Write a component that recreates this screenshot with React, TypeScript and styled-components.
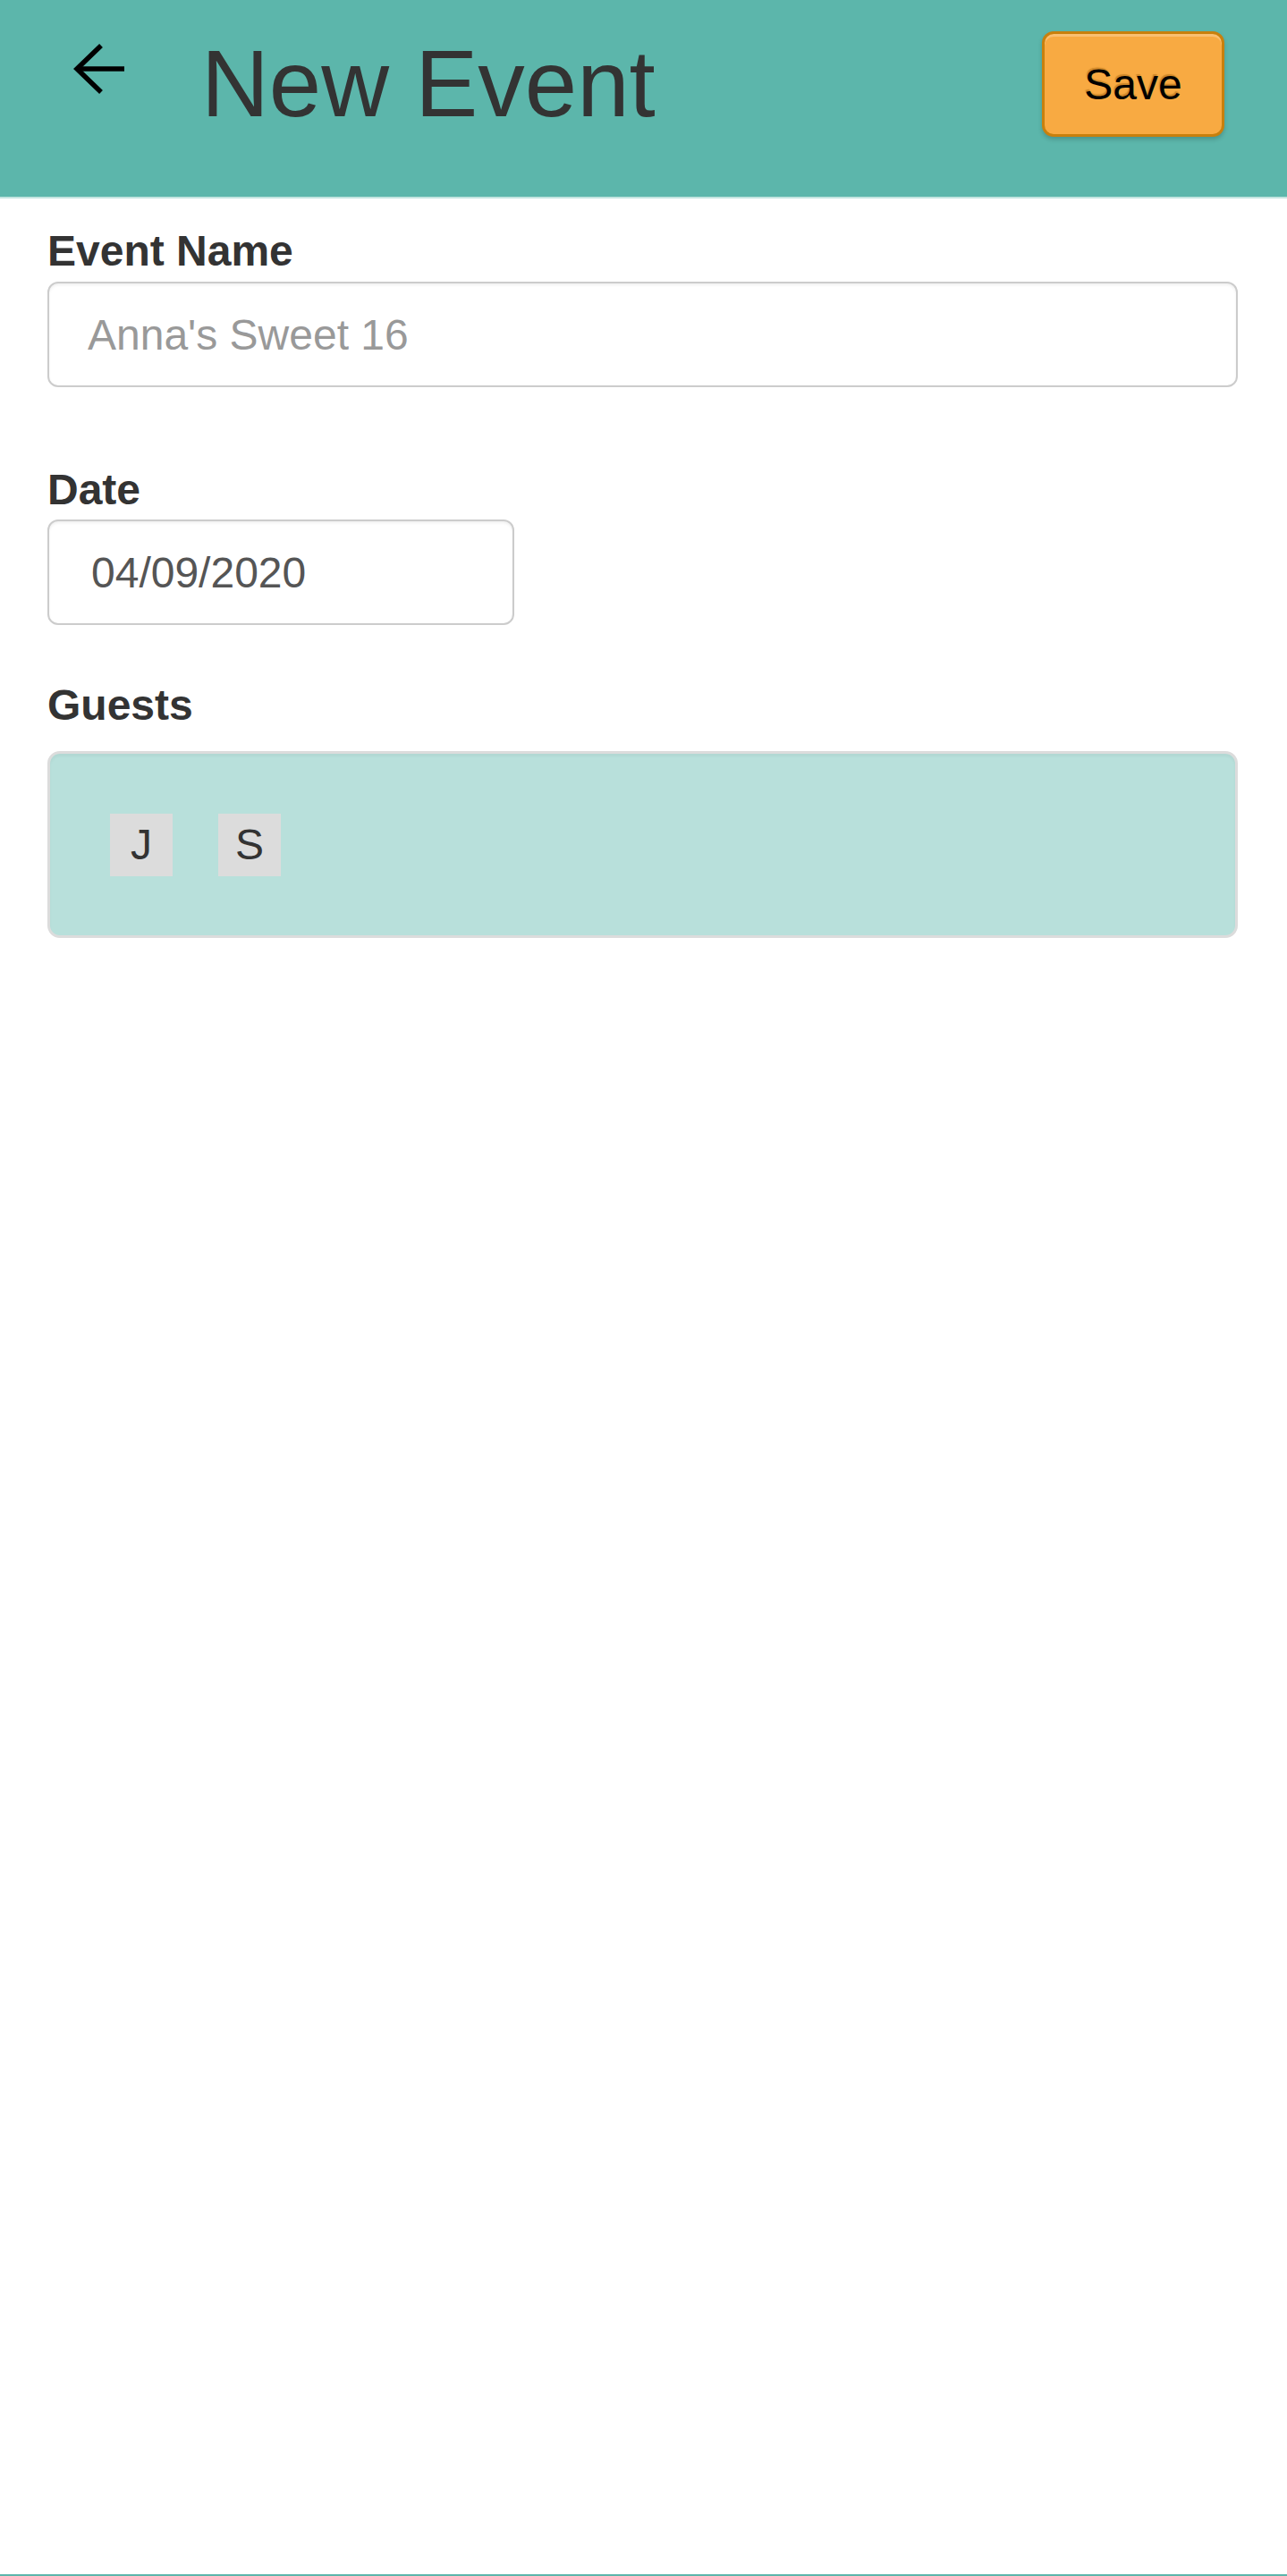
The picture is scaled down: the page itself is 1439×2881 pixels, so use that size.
import React from "react";
import styled, { createGlobalStyle } from "styled-components";

const GlobalStyle = createGlobalStyle`
  html, body {
    margin: 0;
    padding: 0;
    background: #ffffff;
  }
  body {
    font-family: "Liberation Sans", Arial, sans-serif;
    color: #333333;
  }
  * { box-sizing: border-box; }
`;

const Page = styled.div`
  min-height: 100vh;
  display: flex;
  flex-direction: column;
  border-bottom: 2px solid #5cb6ab;
`;

const Header = styled.header`
  height: 222px;
  background: #5cb6ab;
  border-bottom: 2px solid #c3e5e0;
  display: flex;
  align-items: flex-start;
  padding: 0 70px 0 81px;
`;

const BackButton = styled.button`
  margin-top: 48px;
  width: 60px;
  height: 58px;
  padding: 0;
  border: none;
  background: transparent;
  display: flex;
  cursor: pointer;
`;

const Title = styled.h1`
  margin: 34px 0 0 84px;
  font-size: 105px;
  line-height: 120px;
  font-weight: 400;
  color: #333333;
`;

const SaveButton = styled.button`
  margin-left: auto;
  margin-top: 35px;
  width: 204px;
  height: 118px;
  border: 3px solid #c8800d;
  border-radius: 13px;
  background: #f8aa42;
  box-shadow: inset 0 3px 0 rgba(255, 255, 255, 0.25), 0 3px 5px rgba(0, 0, 0, 0.18);
  font-family: "Liberation Sans", Arial, sans-serif;
  font-size: 48px;
  color: #000000;
  text-shadow: -1px -2px 1px rgba(170, 105, 20, 0.55);
  cursor: pointer;
`;

const Form = styled.main`
  display: flex;
  flex-direction: column;
  padding: 31px 55px 0 53px;
`;

const Field = styled.div<{ $gap: number; $after: number }>`
  display: flex;
  flex-direction: column;
  gap: ${(p) => p.$gap}px;
  margin-bottom: ${(p) => p.$after}px;
`;

const Label = styled.label`
  font-size: 48px;
  line-height: 56px;
  font-weight: 700;
  color: #333333;
`;

const TextInput = styled.input<{ $width?: number; $inset?: number }>`
  width: ${(p) => (p.$width ? `${p.$width}px` : "100%")};
  height: 118px;
  border: 2px solid #cccccc;
  border-radius: 12px;
  box-shadow: inset 0 2px 3px rgba(0, 0, 0, 0.06);
  padding: 0 0 0 ${(p) => p.$inset ?? 43}px;
  font-family: "Liberation Sans", Arial, sans-serif;
  font-size: 48px;
  color: #555555;
  background: #ffffff;
  outline: none;

  &::placeholder {
    color: #999999;
  }
`;

const GuestBox = styled.div`
  height: 209px;
  border: 3px solid #dcdcdc;
  border-radius: 14px;
  background: #b8e0db;
  box-shadow: inset 0 3px 3px rgba(0, 0, 0, 0.04);
  display: flex;
  align-items: center;
  gap: 51px;
  padding: 0 67px;
`;

const Chip = styled.span`
  width: 70px;
  height: 70px;
  background: #dcdcdc;
  display: flex;
  align-items: center;
  justify-content: center;
  font-size: 48px;
  color: #333333;
`;

const BackArrow = () => (
  <svg width="60" height="58" viewBox="0 0 60 58" fill="none">
    <path d="M5 29 H58" stroke="#000" strokeWidth="5.5" />
    <path d="M32 3 L5 29 L32 55" stroke="#000" strokeWidth="5.5" strokeLinejoin="miter" />
  </svg>
);

export default function App() {
  const guests = ["J", "S"];
  return (
    <>
      <GlobalStyle />
      <Page>
        <Header>
          <BackButton aria-label="Back">
            <BackArrow />
          </BackButton>
          <Title>New Event</Title>
          <SaveButton>Save</SaveButton>
        </Header>
        <Form>
          <Field $gap={6} $after={87}>
            <Label>Event Name</Label>
            <TextInput placeholder="Anna's Sweet 16" />
          </Field>
          <Field $gap={5} $after={62}>
            <Label>Date</Label>
            <TextInput $width={522} $inset={47} defaultValue="04/09/2020" />
          </Field>
          <Field $gap={23} $after={0}>
            <Label>Guests</Label>
            <GuestBox>
              {guests.map((g) => (
                <Chip key={g}>{g}</Chip>
              ))}
            </GuestBox>
          </Field>
        </Form>
      </Page>
    </>
  );
}
